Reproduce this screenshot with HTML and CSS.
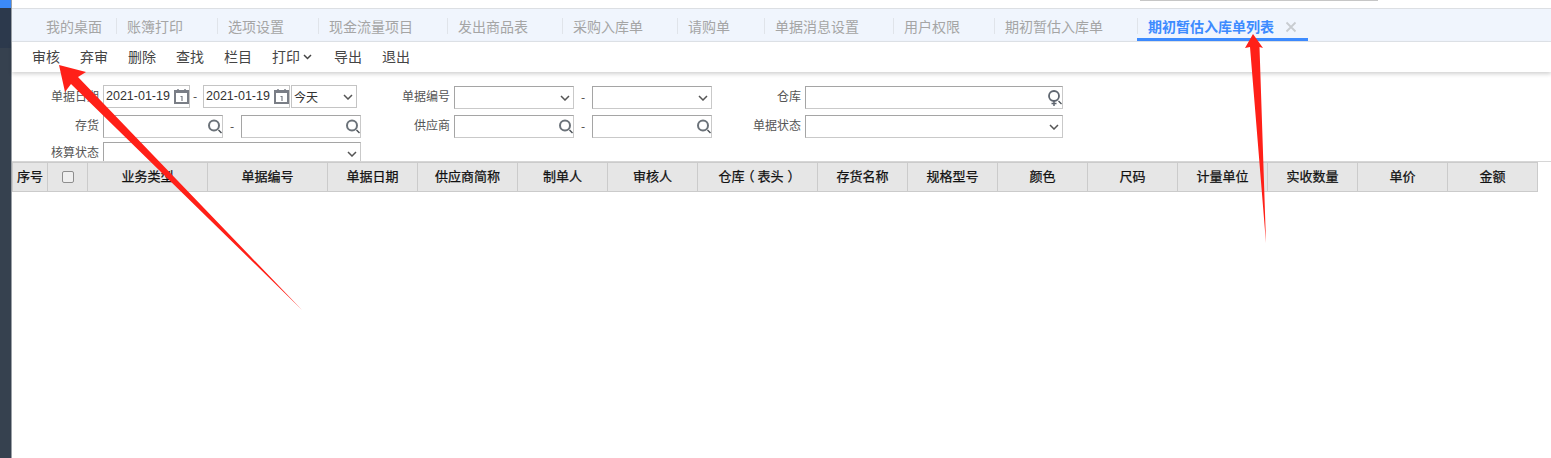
FILE: index.html
```html
<!DOCTYPE html>
<html lang="zh">
<head>
<meta charset="utf-8">
<title>期初暂估入库单列表</title>
<link rel="stylesheet" href="styles.css">
</head>
<body>
<svg class="defs" width="0" height="0" aria-hidden="true">
  <symbol id="i-chev" viewBox="0 0 10 6"><path d="M1 1l4 4 4-4" stroke="#555" stroke-width="1.500" fill="none"/></symbol>
  <symbol id="i-mag" viewBox="0 0 16 16"><circle cx="7" cy="6.500" r="5" fill="none" stroke="#6b7279" stroke-width="2"/><path d="M11.500 11l3 3" stroke="#4a5056" stroke-width="1.400"/></symbol>
  <symbol id="i-magplus" viewBox="0 0 16 17"><circle cx="7" cy="6" r="5" fill="none" stroke="#5f6670" stroke-width="1.800"/><path d="M7 11v5M4.500 13.500h5" stroke="#5f6670" stroke-width="1.500"/><path d="M11.500 11l3 3" stroke="#4a5056" stroke-width="1.300"/></symbol>
  <symbol id="i-cal" viewBox="0 0 15 15"><rect x="1" y="2" width="13" height="12" fill="#fff" stroke="#7a7e86" stroke-width="2"/><rect x="1" y="1" width="13" height="3" fill="#7a7e86"/><path d="M4 0v3M11 0v3" stroke="#7a7e86" stroke-width="1.500"/><path d="M6.500 7.500H8v4.500" stroke="#7a7e86" stroke-width="1.200" fill="none"/></symbol>
</svg>
<div class="app">
  <aside class="side"></aside>
  <main class="main">
    <div class="topbar"><div class="topsliver"></div></div>
    <nav class="tabs">
      <span class="tab">我的桌面</span>
      <span class="tab">账簿打印</span>
      <span class="tab">选项设置</span>
      <span class="tab">现金流量项目</span>
      <span class="tab">发出商品表</span>
      <span class="tab">采购入库单</span>
      <span class="tab">请购单</span>
      <span class="tab">单据消息设置</span>
      <span class="tab">用户权限</span>
      <span class="tab">期初暂估入库单</span>
      <span class="tab active">期初暂估入库单列表<svg class="close" width="12" height="12" viewBox="0 0 12 12"><path d="M1.500 1.500l9 9M10.500 1.500l-9 9" stroke="#c8ccd0" stroke-width="1.800" fill="none"/></svg></span>
    </nav>
    <div class="toolbar">
      <span class="tool">审核</span><span class="tool">弃审</span><span class="tool">删除</span><span class="tool">查找</span><span class="tool">栏目</span>
      <span class="tool">打印<svg class="caret" width="9" height="6" viewBox="0 0 9 6"><path d="M1 1l3.500 3.500L8 1" stroke="#444" stroke-width="1.500" fill="none"/></svg></span>
      <span class="tool">导出</span><span class="tool">退出</span>
    </div>
    <form class="filters">
      <label class="lab">单据日期</label>
      <div class="row-date">
        <span class="box date">2021-01-19<svg class="cal" width="15" height="15"><use href="#i-cal"/></svg></span>
        <span class="dash d0">-</span>
        <span class="box date">2021-01-19<svg class="cal" width="15" height="15"><use href="#i-cal"/></svg></span>
        <span class="box today">今天<svg class="chev" width="10" height="6"><use href="#i-chev"/></svg></span>
      </div>
      <label class="lab">单据编号</label>
      <span class="box sel"><svg class="chev" width="10" height="6"><use href="#i-chev"/></svg></span>
      <span class="dash">-</span>
      <span class="box sel"><svg class="chev" width="10" height="6"><use href="#i-chev"/></svg></span>
      <label class="lab">仓库</label>
      <span class="box wide"><svg class="mag" width="16" height="17"><use href="#i-magplus"/></svg></span>

      <label class="lab">存货</label>
      <div class="row-range">
        <span class="box sel"><svg class="mag" width="16" height="16"><use href="#i-mag"/></svg></span>
        <span class="dash">-</span>
        <span class="box sel"><svg class="mag" width="16" height="16"><use href="#i-mag"/></svg></span>
      </div>
      <label class="lab">供应商</label>
      <span class="box sel"><svg class="mag" width="16" height="16"><use href="#i-mag"/></svg></span>
      <span class="dash">-</span>
      <span class="box sel"><svg class="mag" width="16" height="16"><use href="#i-mag"/></svg></span>
      <label class="lab">单据状态</label>
      <span class="box wide"><svg class="chev" width="10" height="6"><use href="#i-chev"/></svg></span>

      <label class="lab">核算状态</label>
      <span class="box status"><svg class="chev" width="10" height="6"><use href="#i-chev"/></svg></span>
    </form>
    <div class="grid-wrap">
      <table class="grid">
        <colgroup>
          <col class="w35"><col class="w40"><col class="w120"><col class="w120"><col class="w90"><col class="w100"><col class="w90"><col class="w90"><col class="w120"><col class="w90"><col class="w90"><col class="w90"><col class="w90"><col class="w90"><col class="w90"><col class="w90"><col class="w90">
        </colgroup>
        <thead>
          <tr>
            <th>序号</th><th><span class="check"></span></th><th>业务类型</th><th>单据编号</th><th>单据日期</th><th>供应商简称</th><th>制单人</th><th>审核人</th><th>仓库<span class="pl">（</span>表头<span class="pr">）</span></th><th>存货名称</th><th>规格型号</th><th>颜色</th><th>尺码</th><th>计量单位</th><th>实收数量</th><th>单价</th><th>金额</th>
          </tr>
        </thead>
      </table>
    </div>
  </main>
  <svg class="arrows" width="1551" height="458" viewBox="0 0 1551 458" aria-hidden="true">
    <path d="M59 65L86 72L78 77L302 310L71 84L65 92Z" fill="#ff2018"/>
    <path d="M1253 34L1263 48L1259.500 47L1266 243L1250 47L1245 48Z" fill="#ff2018"/>
  </svg>
</div>
</body>
</html>
```
FILE: styles.css
```css
* { box-sizing: border-box; }
html, body { margin: 0; padding: 0; }
body {
  width: 1551px; height: 458px; overflow: hidden; background: #fff;
  font-family: "Noto Sans CJK SC", "Liberation Sans", sans-serif;
  font-size: 12px; color: #333;
}
.defs { position: absolute; }
.app { display: flex; width: 1551px; height: 458px; position: relative; }
.side {
  width: 12px; flex: none; border-right: 1px solid #9aa0a6;
  background: linear-gradient(#3b89f7 0 8px, #2c394c 8px 48px, #36414f 48px);
}
.main { flex: 1; min-width: 0; display: flex; flex-direction: column; }
.topbar { height: 9px; border-bottom: 1px solid #dcdfe3; flex: none; display: flex; padding-left: 1128px; }
.topsliver { width: 238px; height: 1px; background: #c6c6c6; }
.tabs { height: 33px; flex: none; background: #f0f5fd; border-bottom: 1px solid #e1e5ea; display: flex; padding-left: 34px; align-items: flex-start; }
.tab {
  font-size: 14px; color: #a5a5a5; line-height: 34px; height: 32px; position: relative;
  padding: 0 34px 0 11px; white-space: nowrap;
}
.tab::before { content: ""; position: absolute; left: 0; top: 9px; height: 16px; width: 1px; background: #e0e4ea; }
.tab:first-child { padding: 0 14px 0 0; }
.tab:first-child::before { display: none; }
.tab.active { color: #3d8bff; font-weight: 700; padding-right: 11px; border-bottom: 3px solid #3d8bff; }
.close { margin-left: 11px; vertical-align: -1px; }
.toolbar {
  height: 30px; flex: none; background: #fff; display: flex; align-items: flex-start; padding-left: 20px; gap: 20px;
  box-shadow: 0 2px 4px rgba(0,0,0,.18); position: relative; font-size: 14px; color: #444;
}
.tool { white-space: nowrap; line-height: 28px; }
.caret { margin-left: 3px; margin-right: 2px; vertical-align: 2px; }
.filters {
  display: grid; flex: none; height: 89px; overflow: hidden;
  grid-template-columns: 91px 258px 93px 120px 18px 120px 93px 258px;
  grid-template-rows: 29px 27px 27px; align-content: start; padding-top: 14px;
  justify-content: start; color: #555; font-size: 12px;
}
.lab { text-align: right; padding-right: 4px; line-height: 20px; white-space: nowrap; color: #555; }
.row-date, .row-range { display: flex; width: 258px; }
.row-date { margin-top: -1px; }
.box {
  display: block; position: relative; height: 23px; border: 1px solid;
  border-color: #a5a5a5 #c9c9c9 #c9c9c9 #a5a5a5; background: #fff; line-height: 21px; white-space: nowrap; flex: none;
}
.date { width: 87px; padding-left: 2px; font-family: "Liberation Sans", sans-serif; font-size: 12.5px; color: #333; border-color: #c4c4c4; }
.today { width: 66px; margin-left: 1px; padding-left: 2px; color: #333; border-color: #c4c4c4; }
.sel { width: 120px; }
.wide { width: 258px; }
.status { width: 258px; height: 23px; }
.dash { width: 18px; text-align: center; line-height: 22px; color: #444; flex: none; }
.d0 { width: 13px; text-align: left; padding-left: 3px; }
.cal { position: absolute; right: 0; top: 3px; }
.chev { position: absolute; right: 3px; top: 8px; }
.mag { position: absolute; right: -1px; top: 3px; }
.grid-wrap { flex: none; border-top: 1px solid #d6d6d6; height: 31px; }
.grid { border-collapse: collapse; table-layout: fixed; width: 1526px; background: #e6e6e6; }
.w35 { width: 35px; } .w40 { width: 40px; } .w90 { width: 90px; } .w100 { width: 100px; } .w120 { width: 120px; }
.grid th {
  height: 29px; border: 1px solid #cbcbcb; padding: 0 0 3px; font-weight: 400; font-size: 13px; color: #111;
  -webkit-text-stroke: .25px #111; text-align: center; white-space: nowrap; background: #e6e6e6;
}
.pl, .pr { display: inline-block; }
.pl { transform: translateX(-3px); }
.pr { transform: translateX(4px); }
.check { display: inline-block; width: 12px; height: 12px; border: 1px solid #8e8e8e; border-radius: 2px; background: #efefef; vertical-align: middle; }
.arrows { position: absolute; left: 0; top: 0; pointer-events: none; }
```
